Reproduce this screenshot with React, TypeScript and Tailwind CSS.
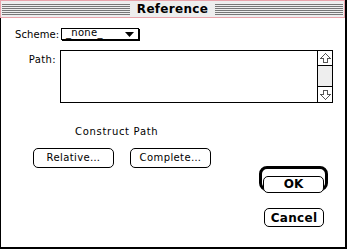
import React from 'react';

const Stripes: React.FC<{ className?: string }> = ({ className }) => (
  <div className={`flex flex-col gap-px ${className ?? ''}`}>
    <div className="h-px bg-[#777]" />
    <div className="h-px bg-[#777]" />
    <div className="h-px bg-[#777]" />
    <div className="h-px bg-[#777]" />
    <div className="h-px bg-[#777]" />
    <div className="h-px bg-[#777]" />
  </div>
);

const ArrowUp = () => (
  <svg width="13" height="13" viewBox="0 0 13 13" shapeRendering="crispEdges">
    <path d="M6.5 1.5 L1.5 6.5 H4.5 V10.5 H8.5 V6.5 H11.5 Z" fill="none" stroke="#555" strokeWidth="1" />
  </svg>
);

const ArrowDown = () => (
  <svg width="13" height="13" viewBox="0 0 13 13" shapeRendering="crispEdges">
    <path d="M6.5 11.5 L1.5 6.5 H4.5 V2.5 H8.5 V6.5 H11.5 Z" fill="none" stroke="#555" strokeWidth="1" />
  </svg>
);

export default function App() {
  const label = "font-['DejaVu_Sans',sans-serif] text-[10px] leading-[12px] tracking-[0.4px] text-black";
  return (
    <div className="w-[347px] h-[249px] bg-white flex flex-col border-r-2 border-black">
      {/* title bar */}
      <div className="h-[18px] w-[345px] shrink-0 border border-[#e9a3ab] bg-[#eeeeee] flex items-center px-px">
        <Stripes className="flex-1" />
        <div className="px-[7px] bg-[#eeeeee] font-['DejaVu_Sans',sans-serif] font-bold text-[12px] leading-[14px] tracking-[0.3px] text-black">
          Reference
        </div>
        <Stripes className="flex-1" />
      </div>

      {/* content */}
      <div className="flex-1 border-l border-b-2 border-black flex flex-col">
        <div className="flex items-start mt-[10px] ml-[14px]">
          <div className="font-['DejaVu_Sans',sans-serif] text-[10px] leading-[12px] tracking-[0.1px] text-black w-[46px] pt-px">Scheme:</div>
          <div className="w-[78px] h-[12px] border border-black shadow-[1px_1px_0_#000] flex items-center justify-between pl-[4px] pr-[4px]">
            <span className="font-['DejaVu_Sans',sans-serif] text-[10px] leading-[10px] tracking-[0.3px] text-black -mt-[3px]">_none_</span>
            <svg width="9" height="5" viewBox="0 0 9 5">
              <path d="M0 0 H9 L4.5 5 Z" fill="#000" />
            </svg>
          </div>
        </div>

        <div className="flex items-start mt-[9px] ml-[14px]">
          <div className={`${label} w-[45px] text-right pr-[4px] mt-[4px]`}>Path:</div>
          <div className="w-[273px] h-[53px] border border-black flex">
            <div className="flex-1" />
            <div className="w-[15px] border-l border-black flex flex-col bg-[#eeeeee]">
              <div className="h-[15px] border-b border-black flex items-center justify-center bg-white">
                <ArrowUp />
              </div>
              <div className="flex-1" />
              <div className="h-[16px] border-t border-black flex items-center justify-center bg-white">
                <ArrowDown />
              </div>
            </div>
          </div>
        </div>

        <div className={`${label} mt-[23px] ml-[74px] tracking-[0.7px]`}>Construct Path</div>

        <div className="flex mt-[10px] ml-[32px] gap-[16px]">
          <button className={`${label} w-[81px] h-[20px] border border-black rounded-[5px] bg-white`}>Relative…</button>
          <button className={`${label} w-[81px] h-[20px] border border-black rounded-[5px] bg-white`}>Complete…</button>
        </div>

        <div className="flex flex-col items-end mr-[17px] -mt-[2px]">
          <div className="w-[69px] h-[25px] border-[3px] border-black rounded-[8px] p-px">
            <button className="w-full h-full border border-black rounded-[5px] bg-white font-['DejaVu_Sans',sans-serif] font-bold text-[12px] leading-[12px] text-black">
              OK
            </button>
          </div>
          <button className="mt-[17px] mr-[4px] w-[60px] h-[19px] border border-black rounded-[5px] bg-white font-['DejaVu_Sans',sans-serif] font-bold text-[12px] leading-[12px] tracking-[0.3px] text-black">
            Cancel
          </button>
        </div>
      </div>
    </div>
  );
}
